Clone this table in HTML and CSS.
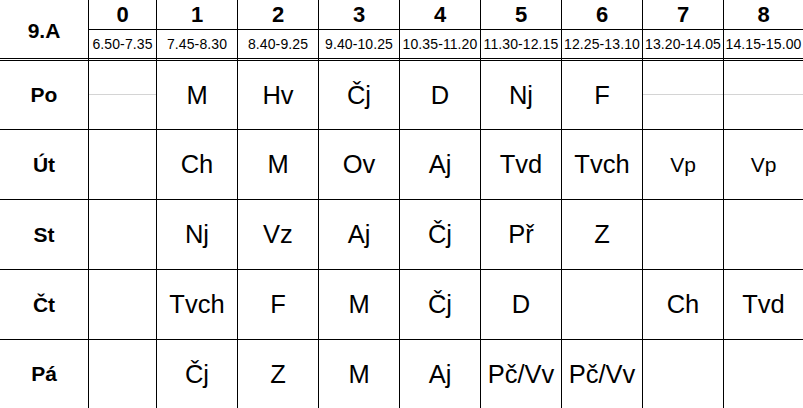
FILE: index.html
```html
<!DOCTYPE html>
<html lang="cs">
<head>
<meta charset="utf-8">
<title>Rozvrh 9.A</title>
<link rel="stylesheet" href="styles.css">
</head>
<body>
<div class="timetable">
  <div class="class-name">9.A</div>
  <div class="num">0</div>
  <div class="num">1</div>
  <div class="num">2</div>
  <div class="num">3</div>
  <div class="num">4</div>
  <div class="num">5</div>
  <div class="num">6</div>
  <div class="num">7</div>
  <div class="num">8</div>

  <div class="time">6.50-7.35</div>
  <div class="time">7.45-8.30</div>
  <div class="time">8.40-9.25</div>
  <div class="time">9.40-10.25</div>
  <div class="time">10.35-11.20</div>
  <div class="time">11.30-12.15</div>
  <div class="time">12.25-13.10</div>
  <div class="time">13.20-14.05</div>
  <div class="time">14.15-15.00</div>

  <div class="day first">Po</div>
  <div class="cell first gl"></div>
  <div class="cell first">M</div>
  <div class="cell first">Hv</div>
  <div class="cell first">Čj</div>
  <div class="cell first">D</div>
  <div class="cell first">Nj</div>
  <div class="cell first">F</div>
  <div class="cell first gl"></div>
  <div class="cell first gl"></div>

  <div class="day">Út</div>
  <div class="cell"></div>
  <div class="cell">Ch</div>
  <div class="cell">M</div>
  <div class="cell">Ov</div>
  <div class="cell">Aj</div>
  <div class="cell">Tvd</div>
  <div class="cell">Tvch</div>
  <div class="cell small">Vp</div>
  <div class="cell small">Vp</div>

  <div class="day">St</div>
  <div class="cell"></div>
  <div class="cell">Nj</div>
  <div class="cell">Vz</div>
  <div class="cell">Aj</div>
  <div class="cell">Čj</div>
  <div class="cell">Př</div>
  <div class="cell">Z</div>
  <div class="cell"></div>
  <div class="cell"></div>

  <div class="day">Čt</div>
  <div class="cell"></div>
  <div class="cell">Tvch</div>
  <div class="cell">F</div>
  <div class="cell">M</div>
  <div class="cell">Čj</div>
  <div class="cell">D</div>
  <div class="cell"></div>
  <div class="cell">Ch</div>
  <div class="cell">Tvd</div>

  <div class="day">Pá</div>
  <div class="cell"></div>
  <div class="cell">Čj</div>
  <div class="cell">Z</div>
  <div class="cell">M</div>
  <div class="cell">Aj</div>
  <div class="cell">Pč/Vv</div>
  <div class="cell">Pč/Vv</div>
  <div class="cell"></div>
  <div class="cell"></div>
</div>
</body>
</html>
```

FILE: styles.css
```css
html, body {
  margin: 0;
  padding: 0;
  background: #ffffff;
  overflow: hidden;
}

body {
  font-family: "Liberation Sans", Arial, sans-serif;
  color: #000000;
}

.timetable {
  display: grid;
  grid-template-columns: 88px 68px repeat(7, 81px) 80px;
  grid-template-rows: 29px 29px 71px 70px 70px 70px 69px;
  width: 803px;
}

.timetable > div {
  display: flex;
  align-items: center;
  justify-content: center;
  box-sizing: border-box;
  white-space: nowrap;
}

.class-name {
  grid-row: 1 / span 2;
  font-weight: bold;
  font-size: 21px;
  padding-top: 3px;
}

.num {
  border-left: 1px solid #000;
  font-weight: bold;
  font-size: 22px;
}

.time {
  border-left: 1px solid #000;
  border-top: 1px solid #000;
  font-size: 14px;
  letter-spacing: 0.1px;
}

.day {
  border-top: 1px solid #000;
  font-weight: bold;
  font-size: 21px;
}

.cell {
  border-left: 1px solid #000;
  border-top: 1px solid #000;
  font-size: 25.5px;
}

.first {
  border-top: 3px double #000;
}

.cell.small {
  font-size: 21px;
}

.cell.gl {
  background: linear-gradient(#d4d4d4, #d4d4d4) 0 33px / 100% 1px no-repeat;
}
```
